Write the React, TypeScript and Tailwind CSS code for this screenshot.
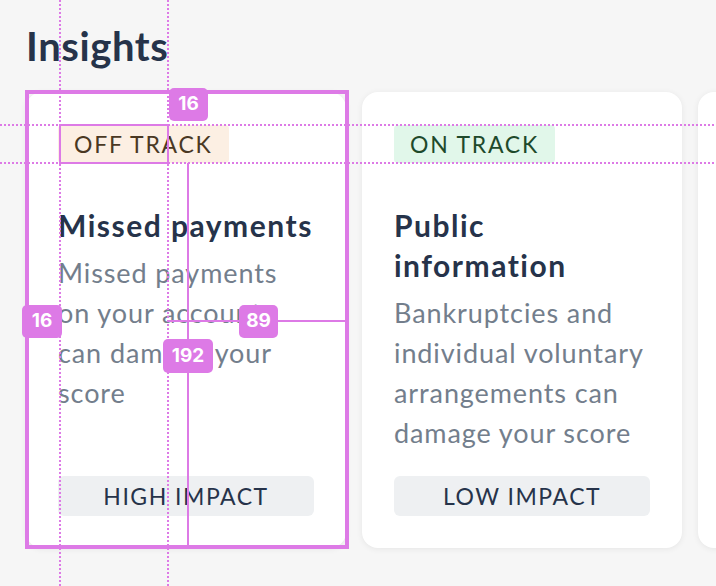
import React from 'react'

type Insight = {
    status: 'off' | 'on'
    title: string
    description: string
    impact: string
}

const insights: Insight[] = [
    {
        status: 'off',
        title: 'Missed payments',
        description: 'Missed payments on your account can damage your score',
        impact: 'HIGH IMPACT',
    },
    {
        status: 'on',
        title: 'Public information',
        description: 'Bankruptcies and individual voluntary arrangements can damage your score',
        impact: 'LOW IMPACT',
    },
    {
        status: 'on',
        title: 'Electoral roll',
        description: 'Being registered to vote helps lenders confirm who you are',
        impact: 'MEDIUM IMPACT',
    },
]

function StatusBadge({ status }: { status: Insight['status'] }) {
    if (status === 'off') {
        return (
            <span className="inline-flex h-[38px] items-center rounded-[4px] bg-[#fcefe3] px-[16px] text-[23px] tracking-[1.75px] text-[#4a3823]">
                OFF TRACK
            </span>
        )
    }
    return (
        <span className="inline-flex h-[38px] items-center rounded-[4px] bg-[#e1f7ea] px-[16px] text-[23px] tracking-[1.75px] text-[#1e4a2b]">
            ON TRACK
        </span>
    )
}

function InsightCard({ insight }: { insight: Insight }) {
    return (
        <div className="flex h-[456px] w-[320px] shrink-0 flex-col rounded-[16px] bg-white px-[32px] pt-[33px] pb-[32px] shadow-[0_1px_6px_rgba(0,0,0,0.07)]">
            <div className="flex">
                <StatusBadge status={insight.status} />
            </div>
            <h2 className="mt-[42px] text-[30px] font-bold leading-[40px] tracking-[1.5px] text-[#26334a]">
                {insight.title}
            </h2>
            <p className="mt-[8px] pr-[6px] text-[27px] leading-[40px] tracking-[0.9px] text-[#737e8c]">
                {insight.description}
            </p>
            <div className="mt-auto flex h-[40px] items-center justify-center rounded-[6px] bg-[#eef0f2] text-[23px] tracking-[1.5px] text-[#26334a]">
                {insight.impact}
            </div>
        </div>
    )
}

function Label({ text, className }: { text: string; className: string }) {
    return (
        <div
            className={`absolute flex h-[33px] items-center justify-center rounded-[5px] bg-[#dd7ae6] text-[19px] font-bold text-white ${className}`}
            style={{ fontFamily: 'Inter, "Liberation Sans", sans-serif' }}
        >
            {text}
        </div>
    )
}

export default function App() {
    return (
        <div
            className="relative h-[586px] w-[716px] overflow-hidden bg-[#f6f6f6] px-[26px] pt-[22px]"
            style={{ fontFamily: 'Lato, "Noto Sans", sans-serif' }}
        >
            <h1 className="mb-[22px] text-[40px] font-bold leading-[48px] tracking-[0.6px] text-[#26334a]">Insights</h1>

            <div className="flex gap-[16px]">
                {insights.map(insight => (
                    <InsightCard key={insight.title} insight={insight} />
                ))}
            </div>

            {/* measurement overlay */}
            <div className="pointer-events-none absolute inset-0">
                <div className="absolute top-0 left-[59px] h-full w-[2px] bg-[repeating-linear-gradient(to_bottom,#dd7ae6_0_2px,transparent_2px_4px)]" />
                <div className="absolute top-0 left-[167px] h-full w-[2px] bg-[repeating-linear-gradient(to_bottom,#dd7ae6_0_2px,transparent_2px_4px)]" />
                <div className="absolute top-[124px] left-0 h-[2px] w-full bg-[repeating-linear-gradient(to_right,#dd7ae6_0_2px,transparent_2px_4px)]" />
                <div className="absolute top-[162px] left-0 h-[2px] w-full bg-[repeating-linear-gradient(to_right,#dd7ae6_0_2px,transparent_2px_4px)]" />

                <div className="absolute top-[90px] left-[25px] h-[459px] w-[324px] border-4 border-[#dd7ae6]" />
                <div className="absolute top-[124px] left-[59px] h-[40px] w-[110px] border-2 border-[#dd7ae6]" />
                <div className="absolute top-[163px] left-[187px] h-[386px] w-[2px] bg-[#dd7ae6]" />
                <div className="absolute top-[320px] left-[168px] h-[2px] w-[178px] bg-[#dd7ae6]" />

                <Label text="16" className="top-[88px] left-[169px] w-[39px]" />
                <Label text="16" className="top-[305px] left-[22px] w-[40px]" />
                <Label text="89" className="top-[305px] left-[239px] w-[39px]" />
                <Label text="192" className="top-[339px] left-[163px] w-[50px] h-[34px]" />
            </div>
        </div>
    )
}
